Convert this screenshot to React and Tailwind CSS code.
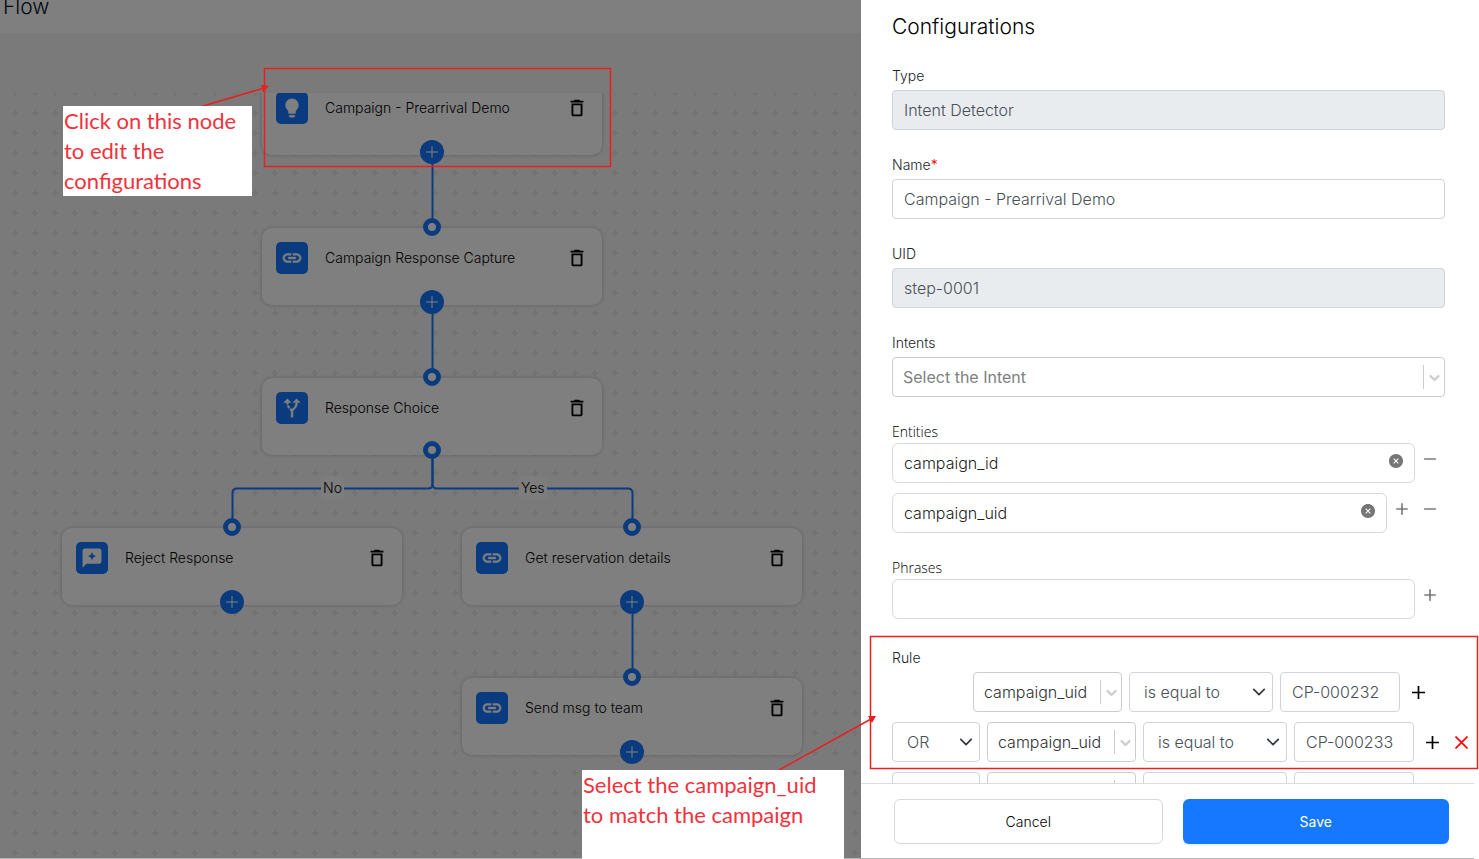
import React from 'react';
import { MdLightbulb, MdLink, MdAltRoute, MdReviews, MdOutlineDelete } from 'react-icons/md';
import { AiFillCloseCircle, AiOutlinePlus, AiOutlineMinus } from 'react-icons/ai';

const NODES = [
  { id: 'n1', title: 'Campaign - Prearrival Demo', icon: MdLightbulb, x: 262, y: -15, add: true },
  { id: 'n2', title: 'Campaign Response Capture', icon: MdLink, x: 262, y: 135, input: true, add: true },
  { id: 'n3', title: 'Response Choice', icon: MdAltRoute, x: 262, y: 285, input: true, branch: true },
  { id: 'n4', title: 'Reject Response', icon: MdReviews, x: 62, y: 435, input: true, add: true },
  { id: 'n5', title: 'Get reservation details', icon: MdLink, x: 462, y: 435, input: true, add: true },
  { id: 'n6', title: 'Send msg to team', icon: MdLink, x: 462, y: 585, input: true, add: true },
];

const EDGES = [
  'M432.5 60V134',
  'M432.5 210V284',
  'M432.5 357V391Q432.5 395.5 428 395.5H237Q232.500 395.5 232.500 400V434',
  'M432.5 357V391Q432.5 395.5 437 395.5H628Q632.500 395.5 632.500 400V434',
  'M632.5 510V584',
];

const RULES = [
  { id: 1, value: 'CP-000232' },
  { id: 2, joiner: 'OR', value: 'CP-000233' },
  { id: 3, joiner: 'OR', value: 'CP-000234' },
];

function Ring({ className }) {
  return <span className={`absolute left-1/2 size-[18px] -translate-x-1/2 rounded-full border-5 border-[#1677ff] bg-white ${className}`} />;
}

function FlowNode({ node }) {
  const Icon = node.icon;
  return (
    <div
      className="absolute h-[77px] w-[340px] rounded-[10px] bg-white shadow-[0_0_4px_rgba(0,0,0,0.22)]"
      style={{ left: node.x, top: node.y }}
    >
      <div className="flex items-center pt-[14px] pr-4 pl-[14px]">
        <span className="flex size-8 items-center justify-center rounded-[5px] bg-[#1677ff] text-white">
          <Icon size={22} className="[&>path:last-child]:stroke-current [&>path:last-child]:stroke-[0.5px]" />
        </span>
        <span className="ml-[17px] flex-1 text-sm font-light text-black">{node.title}</span>
        <button type="button" aria-label={`Delete ${node.title}`} className="text-black">
          <MdOutlineDelete size={22} className="-mr-[2px]" />
        </button>
      </div>
      {node.input && <Ring className="-top-[10px]" />}
      {node.branch && <Ring className="-bottom-[4px]" />}
      {node.add && (
        <button
          type="button"
          aria-label={`Add step after ${node.title}`}
          className="absolute -bottom-[9px] left-1/2 flex size-6 -translate-x-1/2 items-center justify-center rounded-full bg-[#1677ff] text-white"
        >
          <svg width="12" height="12" viewBox="0 0 12 12" stroke="currentColor"><path d="M6 0v12M0 6h12" /></svg>
        </button>
      )}
    </div>
  );
}

function FlowCanvas() {
  return (
    <div className="relative min-h-0 flex-1 overflow-hidden">
      <svg className="absolute inset-0 size-full" aria-hidden="true">
        <defs>
          <pattern id="crosses" x="5" y="-10" width="20" height="20" patternUnits="userSpaceOnUse">
            <path d="M10 7v6M7 10h6" stroke="#e6e6e6" strokeWidth="2" />
          </pattern>
        </defs>
        <rect width="100%" height="100%" fill="url(#crosses)" />
        {EDGES.map(d => <path key={d} d={d} fill="none" stroke="#1677ff" strokeWidth="2" />)}
      </svg>
      <span className="absolute top-[383px] left-[321px] rounded-xs bg-[#fafafa] px-[2px] text-sm leading-6 font-light text-black">No</span>
      <span className="absolute top-[383px] left-[519px] rounded-xs bg-[#fafafa] px-[2px] text-sm leading-6 font-light text-black">Yes</span>
      {NODES.map(n => <FlowNode key={n.id} node={n} />)}
    </div>
  );
}

/* Chevron with the divider, used by the searchable selects */
function SplitChevron() {
  return (
    <span className="pointer-events-none absolute inset-y-2 right-0 flex w-[22px] items-center justify-center border-l border-[#ccc] text-[#ccc]">
      <svg width="17" height="17" viewBox="0 0 20 20" fill="currentColor" stroke="currentColor" strokeWidth="0.5">
        <path d="M4.516 7.548c0.436-0.446 1.043-0.481 1.576 0l3.908 3.747 3.908-3.747c0.533-0.481 1.141-0.446 1.574 0 0.436 0.445 0.408 1.197 0 1.615-0.406 0.418-4.695 4.502-4.695 4.502-0.217 0.223-0.502 0.335-0.787 0.335s-0.57-0.112-0.789-0.335c0 0-4.287-4.084-4.695-4.502s-0.436-1.170 0-1.615z" />
      </svg>
    </span>
  );
}

function SearchSelect({ id, label, options, className, textClass }) {
  return (
    <div className={`relative ${className || ''}`}>
      <select
        id={id}
        aria-label={label}
        className={`h-10 w-full appearance-none rounded border border-[#ccc] bg-white pr-6 pl-[10px] text-base ${textClass}`}
      >
        {options.map(o => <option key={o}>{o}</option>)}
      </select>
      <SplitChevron />
    </div>
  );
}

function PlainSelect({ label, options, className }) {
  return (
    <div className={`relative ${className}`}>
      <select
        aria-label={label}
        className="h-10 w-full appearance-none rounded border border-[#ced4da] bg-white pr-8 pl-[14px] text-base font-light text-[#495057]"
      >
        {options.map(o => <option key={o}>{o}</option>)}
      </select>
      <svg className="pointer-events-none absolute top-[13px] right-[7px] text-[#343a40]" width="14" height="14" viewBox="0 0 16 16" fill="none" stroke="currentColor" strokeWidth="2" strokeLinecap="round" strokeLinejoin="round">
        <path d="m2 5 6 6 6-6" />
      </svg>
    </div>
  );
}

function TextField({ id, label, value, required, disabled }) {
  return (
    <div>
      <label htmlFor={id} className="mb-1 block text-sm leading-5 font-light">
        {label}{required && <span className="text-[#f00]">*</span>}
      </label>
      <input
        id={id}
        type="text"
        defaultValue={value}
        disabled={disabled}
        className="block h-10 w-full rounded border border-[#ced4da] bg-white px-[11px] text-base font-light text-[#495057] disabled:bg-[#e9ecef]"
      />
    </div>
  );
}

function TagInput({ id, label, value, children }) {
  return (
    <div className="flex items-center gap-[7px] pr-[7px]">
      <div className="relative flex-1">
        <input
          id={id}
          type="text"
          aria-label={label}
          defaultValue={value}
          className="block h-10 w-full rounded-md border border-[#d9d9d9] bg-white px-[11px] text-base font-light text-black/90"
        />
        {value && (
          <button type="button" aria-label={`Clear ${value}`} className="absolute top-[10px] right-[11px] text-[#757575]">
            <AiFillCloseCircle size={16} />
          </button>
        )}
      </div>
      <div className="mb-2 flex gap-3 text-[#666]">{children}</div>
    </div>
  );
}

function IconButton({ label, icon: Icon }) {
  return <button type="button" aria-label={label}><Icon size={16} className="stroke-current stroke-[20px]" /></button>;
}

function RuleRow({ rule }) {
  return (
    <div className={`flex items-center gap-[7px] ${rule.joiner ? '' : 'pl-[81px]'}`}>
      {rule.joiner && <PlainSelect label="Joiner" options={[rule.joiner, 'AND']} className="w-[88px] shrink-0" />}
      <SearchSelect label="Entity" options={['campaign_uid', 'campaign_id']} className="w-[149px] shrink-0" textClass="font-light text-[#333]" />
      <PlainSelect label="Condition" options={['is equal to', 'is not equal to']} className="w-36 shrink-0" />
      <input
        type="text"
        aria-label="Value"
        defaultValue={rule.value}
        className="h-10 w-[120px] shrink-0 rounded border border-[#ced4da] bg-white px-[11px] text-base font-light text-[#495057]"
      />
      <button type="button" aria-label="Add rule" className="ml-[5px] text-black">
        <svg width="13" height="13" viewBox="0 0 13 13" stroke="currentColor" strokeWidth="1.700"><path d="M6.500 0v13M0 6.500h13" /></svg>
      </button>
      {rule.joiner && (
        <button type="button" aria-label="Remove rule" className="ml-[9px] text-[#f00]">
          <svg width="13" height="13" viewBox="0 0 13 13" stroke="currentColor" strokeWidth="1.600"><path d="M.5.5l12 12M12.500.5l-12 12" /></svg>
        </button>
      )}
    </div>
  );
}

function ConfigDrawer() {
  return (
    <aside className="flex w-[618px] max-w-full shrink-0 flex-col bg-white">
      <div className="min-h-0 flex-1 overflow-y-auto pt-[11px] pl-[31px] [scrollbar-width:none]">
        <h2 className="mb-[23px] text-[21px] leading-8 font-light text-black">Configurations</h2>
        <div className="flex flex-col gap-[25px] pr-[34px]">
          <TextField id="type" label="Type" value="Intent Detector" disabled />
          <TextField id="name" label="Name" value="Campaign - Prearrival Demo" required />
          <TextField id="uid" label="UID" value="step-0001" disabled />
          <div>
            <label htmlFor="intents" className="mb-1 block text-sm leading-5 font-light">Intents</label>
            <SearchSelect id="intents" options={['Select the Intent']} textClass="font-normal text-[#808080]" />
          </div>
          <div>
            <label htmlFor="entity-1" className="mb-px block font-['Open_Sans'] text-sm leading-5 font-light text-black">Entities</label>
            <div className="flex flex-col gap-[10px]">
              <TagInput id="entity-1" value="campaign_id">
                <IconButton label="Remove entity" icon={AiOutlineMinus} />
              </TagInput>
              <TagInput id="entity-2" label="Entity 2" value="campaign_uid">
                <IconButton label="Add entity" icon={AiOutlinePlus} />
                <IconButton label="Remove entity" icon={AiOutlineMinus} />
              </TagInput>
            </div>
          </div>
          <div>
            <label htmlFor="phrase" className="mb-px block font-['Open_Sans'] text-sm leading-5 font-light text-black">Phrases</label>
            <TagInput id="phrase">
              <IconButton label="Add phrase" icon={AiOutlinePlus} />
            </TagInput>
          </div>
        </div>
        <div className="pt-[29px]">
          <div className="mb-1 text-sm leading-5 font-light">Rule</div>
          <div className="flex flex-col gap-[10px]">
            {RULES.map(r => <RuleRow key={r.id} rule={r} />)}
          </div>
        </div>
      </div>
      <div className="mr-[5px] flex gap-5 border-t border-b border-t-[#d9dde0] border-b-[#b5b5b5] pt-[15px] pr-[25px] pb-[14px] pl-[33px]">
        <button type="button" className="h-[45px] flex-1 rounded-md border border-[#d9d9d9] bg-white text-sm font-light text-black">Cancel</button>
        <button type="button" className="h-[45px] flex-1 rounded-md bg-[#1677ff] text-sm font-normal text-white shadow-[0_2px_0_rgba(5,145,255,0.1)]">Save</button>
      </div>
    </aside>
  );
}

/* Red call-outs drawn on top of the page */
function Annotations() {
  return (
    <div className="pointer-events-none absolute inset-0 font-[Lato] text-[22px] leading-[30px] text-[#f0323c]">
      <svg className="absolute inset-0 size-full" aria-hidden="true" fill="none" stroke="#e8201f" strokeWidth="1.5">
        <rect x="264.500" y="68.500" width="346" height="98" />
        <rect x="870.500" y="636.500" width="607" height="132" />
        <path d="M203 106L264 88M779 770L871 719" />
        <path d="M269 86l-8 -1l2 7zM876 716l-8 0l4 7z" fill="#e8201f" stroke="none" />
      </svg>
      <p className="absolute top-[106px] left-[63px] h-[90px] w-[189px] bg-white pl-px">
        Click on this node<br />to edit the<br />configurations
      </p>
      <p className="absolute top-[770px] left-[582px] h-[89px] w-[262px] bg-white pl-px">
        Select the campaign_uid<br />to match the campaign
      </p>
    </div>
  );
}

export default function App() {
  return (
    <div className="relative flex h-screen overflow-hidden bg-white font-[Inter] text-[#212529]">
      <main className="relative flex min-w-0 flex-1 flex-col bg-[#f5f5f5]">
        <header className="h-[33px] bg-white">
          <h1 className="pl-[3px] text-[21px] leading-[14px] font-light text-[#001529]">Flow</h1>
        </header>
        <div className="h-[60px]" />
        <FlowCanvas />
        <div className="absolute inset-0 border-b border-[#b5b5b5] bg-black/50" />
      </main>
      <ConfigDrawer />
      <Annotations />
    </div>
  );
}
